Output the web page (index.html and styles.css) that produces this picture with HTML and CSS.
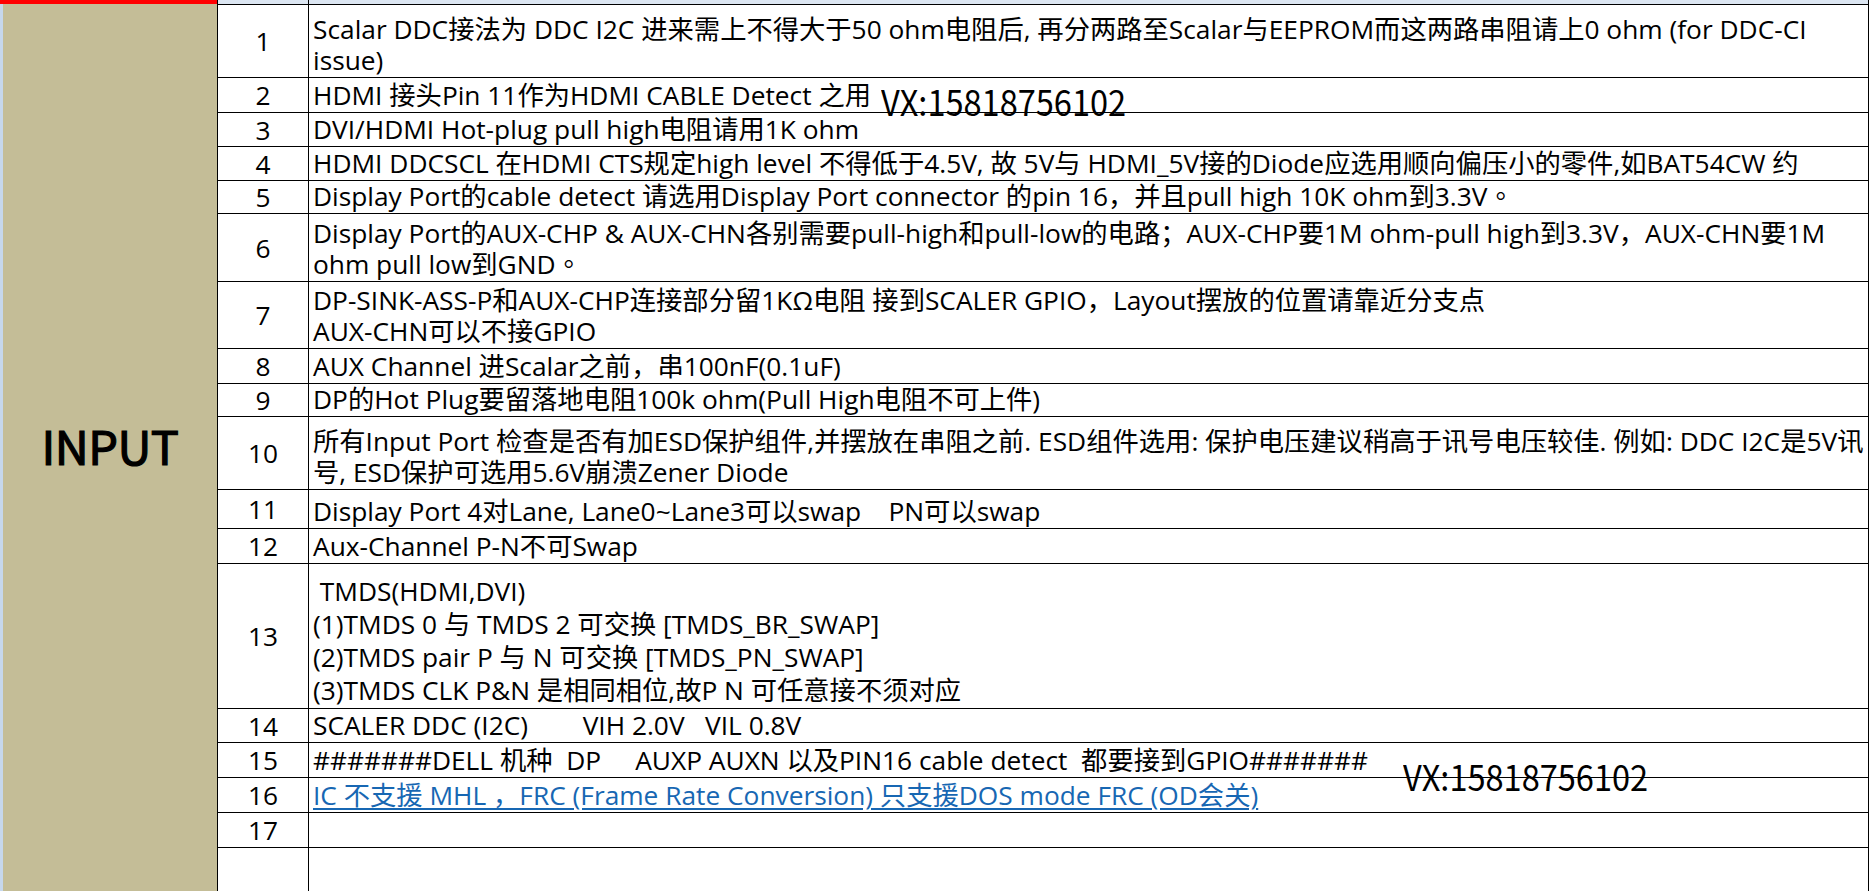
FILE: index.html
```html
<!DOCTYPE html>
<html lang="zh">
<head>
    <meta charset="UTF-8">
    <title>INPUT checklist</title>
    <link rel="stylesheet" href="styles.css">
</head>
<body>
    <div class="sheet">
        <div class="side">
            <div class="side-head"></div>
            <div class="side-body">
                <div class="edge"></div>
                <div class="label">INPUT</div>
            </div>
        </div>

        <div class="rows">
            <div class="row head">
                <div class="num"></div>
                <div class="text"></div>
            </div>
            <div class="row" style="height:73px">
                <div class="num">1</div>
                <div class="text">Scalar DDC接法为 DDC I2C 进来需上不得大于50 ohm电阻后, 再分两路至Scalar与EEPROM而这两路串阻请上0 ohm (for DDC-CI<br>issue)</div>
            </div>
            <div class="row" style="height:35px">
                <div class="num">2</div>
                <div class="text">HDMI 接头Pin 11作为HDMI CABLE Detect 之用<span class="stamp stamp-top">VX:15818756102</span></div>
            </div>
            <div class="row" style="height:34px">
                <div class="num">3</div>
                <div class="text">DVI/HDMI Hot-plug pull high电阻请用1K ohm</div>
            </div>
            <div class="row" style="height:34px">
                <div class="num">4</div>
                <div class="text">HDMI DDCSCL 在HDMI CTS规定high level 不得低于4.5V, 故 5V与 HDMI_5V接的Diode应选用顺向偏压小的零件,如BAT54CW 约</div>
            </div>
            <div class="row" style="height:33px">
                <div class="num">5</div>
                <div class="text">Display Port的cable detect 请选用Display Port connector 的pin 16，并且pull high 10K ohm到3.3V。</div>
            </div>
            <div class="row" style="height:68px">
                <div class="num">6</div>
                <div class="text">Display Port的AUX-CHP &amp; AUX-CHN各别需要pull-high和pull-low的电路；AUX-CHP要1M ohm-pull high到3.3V，AUX-CHN要1M<br>ohm pull low到GND。</div>
            </div>
            <div class="row" style="height:67px">
                <div class="num">7</div>
                <div class="text">DP-SINK-ASS-P和AUX-CHP连接部分留1KΩ电阻 接到SCALER GPIO，Layout摆放的位置请靠近分支点<br>AUX-CHN可以不接GPIO</div>
            </div>
            <div class="row" style="height:35px">
                <div class="num">8</div>
                <div class="text">AUX Channel 进Scalar之前，串100nF(0.1uF)</div>
            </div>
            <div class="row" style="height:33px">
                <div class="num">9</div>
                <div class="text">DP的Hot Plug要留落地电阻100k ohm(Pull High电阻不可上件)</div>
            </div>
            <div class="row" style="height:73px">
                <div class="num">10</div>
                <div class="text">所有Input Port 检查是否有加ESD保护组件,并摆放在串阻之前. ESD组件选用: 保护电压建议稍高于讯号电压较佳. 例如: DDC I2C是5V讯<br>号, ESD保护可选用5.6V崩溃Zener Diode</div>
            </div>
            <div class="row" style="height:39px">
                <div class="num">11</div>
                <div class="text">Display Port 4对Lane, Lane0~Lane3可以swap    PN可以swap</div>
            </div>
            <div class="row" style="height:35px">
                <div class="num">12</div>
                <div class="text">Aux-Channel P-N不可Swap</div>
            </div>
            <div class="row loose" style="height:145px">
                <div class="num">13</div>
                <div class="text"> TMDS(HDMI,DVI)<br>(1)TMDS 0 与 TMDS 2 可交换 [TMDS_BR_SWAP]<br>(2)TMDS pair P 与 N 可交换 [TMDS_PN_SWAP]<br>(3)TMDS CLK P&amp;N 是相同相位,故P N 可任意接不须对应</div>
            </div>
            <div class="row" style="height:34px">
                <div class="num">14</div>
                <div class="text">SCALER DDC (I2C)        VIH 2.0V   VIL 0.8V</div>
            </div>
            <div class="row" style="height:35px">
                <div class="num">15</div>
                <div class="text">#######DELL 机种  DP     AUXP AUXN 以及PIN16 cable detect  都要接到GPIO#######<span class="stamp stamp-bottom">VX:15818756102</span></div>
            </div>
            <div class="row" style="height:35px">
                <div class="num">16</div>
                <div class="text"><a class="link" href="#">IC 不支援 MHL ，FRC (Frame Rate Conversion) 只支援DOS mode FRC (OD会关)</a></div>
            </div>
            <div class="row" style="height:35px">
                <div class="num">17</div>
                <div class="text"></div>
            </div>
            <div class="row last">
                <div class="num"></div>
                <div class="text"></div>
            </div>
        </div>
    </div>
</body>
</html>
```

FILE: styles.css
```css
:root {
    --line: #000;
    --tan: #c4bd97;
    --head-blue: #dce6f2;
    --edge-blue: #c6d7ec;
    --link: #1767b3;
    --cjk: "Noto Sans CJK TC", "Noto Sans CJK SC", sans-serif;
}

* {
    box-sizing: border-box;
    margin: 0;
    padding: 0;
}

html, body {
    height: 100%;
    overflow: hidden;
}

body {
    font-family: "Open Sans", "Noto Sans CJK TC", "Noto Sans CJK SC", sans-serif;
    font-size: 26.3px;
    color: #000;
    background: #fff;
}

.sheet {
    display: flex;
    height: 891px;
}

/* merged label column */
.side {
    width: 218px;
    display: flex;
    flex-direction: column;
    border-right: 1px solid var(--line);
}

.side-head {
    height: 4px;
    background: #f00;
}

.side-body {
    flex: 1;
    display: flex;
}

.edge {
    width: 3px;
    background: var(--edge-blue);
}

.label {
    flex: 1;
    display: flex;
    align-items: center;
    justify-content: center;
    background: var(--tan);
    font-family: var(--cjk);
    font-size: 47px;
    font-weight: 400;
    -webkit-text-stroke: 1.2px #000;
    letter-spacing: -0.5px;
    padding-bottom: 6px;
}

/* rows */
.rows {
    display: flex;
    flex-direction: column;
    width: 1651px;
}

.row {
    display: flex;
    flex-shrink: 0;
    border-bottom: 1px solid var(--line);
}

.row.head {
    height: 5px;
    background: var(--head-blue);
}

.row.last {
    flex: 1;
    border-bottom: none;
}

.num {
    width: 91px;
    display: flex;
    align-items: center;
    justify-content: center;
    border-right: 1px solid var(--line);
}

.text {
    position: relative;
    width: 1560px;
    display: flex;
    flex-direction: column;
    justify-content: flex-end;
    padding: 0 0 1px 4px;
    border-right: 1px solid var(--line);
    line-height: 31px;
    white-space: pre;
}

.row.loose .text {
    line-height: 33px;
}

.link {
    color: var(--link);
    text-decoration: underline;
    text-underline-offset: 3px;
}

/* watermark text pasted over the grid */
.stamp {
    position: absolute;
    font-family: var(--cjk);
    font-size: 35px;
    line-height: 35px;
    white-space: nowrap;
    transform: scaleX(0.93);
    transform-origin: left center;
}

.stamp-top {
    left: 572px;
    top: 5px;
}

.stamp-bottom {
    left: 1094px;
    top: 15px;
}
```
